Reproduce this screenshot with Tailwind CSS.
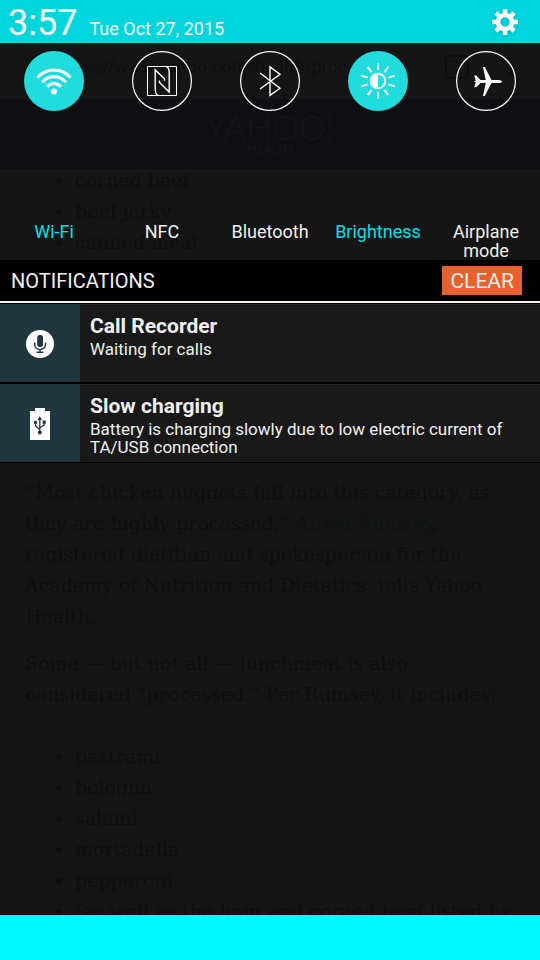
<!DOCTYPE html>
<html lang="en">
<head>
<meta charset="utf-8">
<meta name="viewport" content="width=device-width, initial-scale=1">
<title>Notification shade</title>
<script src="https://cdn.jsdelivr.net/npm/@tailwindcss/browser@4"></script>
</head>
<body class="flex h-screen flex-col overflow-hidden bg-[#151515] font-['Roboto',sans-serif] text-[#f0f0f0]">
  <header class="flex h-[43px] shrink-0 items-end justify-between bg-[#00d5dc] pr-[22px] pl-2 text-white">
    <div class="flex items-baseline gap-3">
      <time class="text-[36px] leading-[39px]">3:57</time>
      <span class="text-lg">Tue Oct 27, 2015</span>
    </div>
    <button type="button" aria-label="Settings" class="mb-2 drop-shadow-sm">
      <svg class="size-[26px]" viewBox="-13 -13 26 26" fill="none" stroke="#fff">
        <circle r="7" stroke-width="4.6"/>
        <g stroke-width="4.4"><path d="M0-8.3V-13M0 8.3V13M-8.3 0H-13M8.3 0H13"/><path d="M5.9-5.9 9.1-9.1M-5.9-5.9-9.1-9.1M5.9 5.9 9.1 9.1M-5.9 5.9-9.1 9.1"/></g>
      </svg>
    </button>
  </header>

  <div class="relative min-h-0 flex-1 overflow-hidden">
    <!-- Dimmed browser page under the shade -->
    <div class="absolute inset-0 overflow-hidden font-['DejaVu_Serif',serif] text-[19px] leading-[31px] text-[#0e0e0e]" aria-hidden="true">
      <div class="flex h-[56px] items-center pr-[27px] pb-2 pl-2 font-['Roboto',sans-serif] text-lg text-[#0f0f0f]">
        <span class="flex h-12 flex-1 items-center gap-5 overflow-hidden border border-[#131313] pl-[15px] whitespace-nowrap"><i class="h-5 w-3 shrink-0 bg-[#0f1611]"></i>https://www.yahoo.com/health/processed</span>
        <span class="ml-6 flex size-6 items-center justify-center rounded-sm border-2 border-[#0f0f0f] text-base">7</span>
        <span class="ml-10 flex flex-col gap-[3px]"><i class="size-1 rounded-full bg-[#0f0f0f]"></i><i class="size-1 rounded-full bg-[#0f0f0f]"></i><i class="size-1 rounded-full bg-[#0f0f0f]"></i></span>
      </div>
      <div class="flex h-[70px] flex-col items-center bg-[#0f0f13] pt-3 text-[#151517]">
        <span class="font-['Lato',sans-serif] text-[34px] leading-[31px] font-light">YAHOO!</span>
        <span class="font-['Lato',sans-serif] text-xs leading-[14px]">HEALTH</span>
      </div>
      <ul class="-mt-1 list-disc pl-[75px]">
        <li>corned beef</li>
        <li>beef jerky</li>
        <li>canned meat</li>
      </ul>
      <p class="mt-[219px] pl-[25px]">“Most chicken nuggets fall into this category, as<br>they are highly processed,” <span class="text-[#0d1215]">Alissa Rumsey</span>,<br>registered dietitian and spokesperson for the<br>Academy of Nutrition and Dietetics, tells Yahoo<br>Health.</p>
      <p class="mt-4 pl-[25px]">Some — but not all — lunchmeat is also<br>considered “processed.” Per Rumsey, it includes:</p>
      <ul class="mt-[31px] list-disc pl-[75px]">
        <li>pastrami</li>
        <li>bologna</li>
        <li>salami</li>
        <li>mortadella</li>
        <li>pepperoni</li>
        <li class="whitespace-nowrap">(as well as the ham and corned beef listed by</li>
      </ul>
    </div>

    <main class="relative">
      <div class="grid h-[217px] grid-cols-5 items-start pt-2 text-lg leading-[19px]">
        <button type="button" aria-pressed="true" class="flex flex-col items-center gap-[111px] text-[#00e0e8]">
          <span class="flex size-[60px] items-center justify-center rounded-full bg-[#20dcdc]">
            <svg class="size-[60px]" viewBox="0 0 60 60" fill="none" stroke="#fff" stroke-width="3">
              <path d="M13.5 26.500C22.500 16.500 37.500 16.500 46.500 26.500M18.200 31.200C24.500 24 35.500 24 41.800 31.200M23 35.700C27 31.300 33 31.300 37 35.700"/><circle cx="30" cy="40.500" r="3" fill="#fff" stroke="none"/>
            </svg>
          </span>
          <span>Wi-Fi</span>
        </button>
        <button type="button" aria-pressed="false" class="flex flex-col items-center gap-[111px]">
          <svg class="size-[60px]" viewBox="0 0 60 60" fill="none" stroke="#fff">
            <circle cx="30" cy="30" r="29.400" stroke-width="1.200"/>
            <path d="M15.500 15.500H44.500V44.500H15.500Z"/>
            <path stroke-width="1.400" d="M26 44.500C23.800 43.500 23.200 41.500 23.200 37V19L32.500 27.800V29.800M34.500 15.500C37 16.500 37.200 18.500 37.200 22V41L27.500 31.500V29.500"/>
          </svg>
          <span>NFC</span>
        </button>
        <button type="button" aria-pressed="false" class="flex flex-col items-center gap-[111px]">
          <svg class="size-[60px]" viewBox="0 0 60 60" fill="none" stroke="#fff">
            <circle cx="30" cy="30" r="29.400" stroke-width="1.200"/>
            <path stroke-width="1.400" d="M20 22 40 37.300 30 44.300V16L40 23.300 20 38"/>
          </svg>
          <span>Bluetooth</span>
        </button>
        <button type="button" aria-pressed="true" class="flex flex-col items-center gap-[111px] text-[#00e0e8]">
          <span class="flex size-[60px] items-center justify-center rounded-full bg-[#20dcdc]">
            <svg class="size-[60px]" viewBox="-30 -30 60 60" fill="none" stroke="#fff" stroke-width="2">
              <circle r="7.300"/><path d="M0-8V8A8 8 0 0 1 0-8Z" fill="#fff" stroke="none"/>
              <path d="M0-11V-17.500M0 11V17.500M6.500-8.900 10.300-14.200M-6.500-8.900-10.300-14.200M6.500 8.900 10.300 14.200M-6.500 8.900-10.300 14.200M10.500-3.400 16.800-5.400M-10.500-3.400-16.800-5.400M10.500 3.400 16.800 5.400M-10.500 3.400-16.800 5.400"/>
            </svg>
          </span>
          <span>Brightness</span>
        </button>
        <button type="button" aria-pressed="false" class="flex flex-col items-center gap-[111px]">
          <svg class="size-[60px]" viewBox="0 0 60 60" fill="none" stroke="#fff">
            <circle cx="30" cy="30" r="29.400" stroke-width="1.200"/>
            <path fill="#fff" stroke="none" d="M46 30.500C46 31.500 44 32 42 32H35.500L28.800 45H27L29.800 32H24.500L20.200 36.200H18.200L19.800 31.200 17.800 30.500 19.800 29.800 18.200 24.500H20.200L24.500 29H29.800L27 16H28.800L35.500 29H42C44 29 46 29.500 46 30.500Z"/>
          </svg>
          <span class="w-20">Airplane mode</span>
        </button>
      </div>

      <div class="flex h-[43px] items-center justify-between border-b-2 border-[#ffebe7] bg-black pr-[18px] pl-[11px]">
        <h2 class="text-xl">NOTIFICATIONS</h2>
        <button type="button" class="h-[29px] bg-[#e8602c] px-2 text-[21px] leading-[31px]">CLEAR</button>
      </div>

      <section class="border-b border-black bg-black pt-px" aria-label="Notifications">
        <article class="mb-[2px] flex h-[78px] bg-[#191919]">
          <div class="flex w-20 shrink-0 items-center justify-center bg-[#1f363f] pt-[2px]">
            <svg class="size-7" viewBox="0 0 28 28" fill="none" stroke="#1f363f">
              <circle cx="14" cy="14" r="14" fill="#fff" stroke="none"/>
              <rect x="11.200" y="5" width="5.800" height="12" rx="2.500" fill="#1f363f" stroke="none"/>
              <path stroke-width="1.400" d="M8.700 12.500V14.500C8.700 21 19.500 21 19.500 14.500V12.500M14 19V22M10.500 22.300H17.500"/>
            </svg>
          </div>
          <div class="flex-1 border-t border-[#282828] pt-2 pr-4 pl-[10px]">
            <h3 class="mb-px text-[21px] leading-[26px] font-bold">Call Recorder</h3>
            <p class="text-[17px] leading-[18px]">Waiting for calls</p>
          </div>
        </article>
        <article class="flex h-[78px] bg-[#191919]">
          <div class="flex w-20 shrink-0 items-center justify-center bg-[#1f363f] pt-[2px]">
            <svg class="h-8 w-5" viewBox="0 0 20 32" fill="none" stroke="#1f363f">
              <path fill="#fff" stroke="none" d="M5 0H15V3H20V32H0V3H5Z"/>
              <path stroke-width="1.300" d="M9.800 10V24M5.500 15V18L9.800 21.500M14.200 14V17L9.800 20"/>
              <g fill="#1f363f" stroke="none"><path d="M9.800 8 12 12H7.600Z"/><circle cx="5.500" cy="14.500" r="1.700"/><path d="M12.600 12.500H15.800V15.700H12.600Z"/><circle cx="9.800" cy="24.500" r="1.900"/></g>
            </svg>
          </div>
          <div class="flex-1 border-t border-[#282828] pt-2 pr-4 pl-[10px]">
            <h3 class="mb-px text-[21px] leading-[26px] font-bold">Slow charging</h3>
            <p class="text-[17px] leading-[18px]">Battery is charging slowly due to low electric current of TA/USB connection</p>
          </div>
        </article>
      </section>
    </main>
  </div>

  <footer class="h-[45px] shrink-0 bg-[#00f9ff]"></footer>
</body>
</html>
